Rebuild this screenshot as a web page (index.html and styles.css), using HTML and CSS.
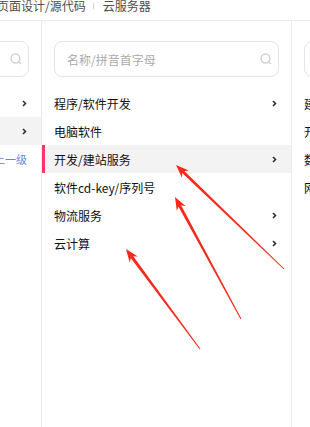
FILE: index.html
```html
<!DOCTYPE html>
<html lang="zh-CN">
<head>
  <meta charset="UTF-8" />
  <title>云服务器</title>
  <link rel="stylesheet" href="styles.css">
</head>
<body>
  <div class="crumbs">
    <span>页面设计/源代码</span>
    <span class="sep"></span>
    <span>云服务器</span>
  </div>

  <div class="cols">
    <div class="col">
      <div class="search">
        <span class="ph"></span>
        <svg class="ico" width="12" height="12" viewBox="0 0 12 12"><circle cx="5.5" cy="5.5" r="4.4"/><path d="M8.6 8.6l2.4 2.4"/></svg>
      </div>
      <ul class="list">
        <li>游戏/软件<svg class="arr" width="5" height="7" viewBox="0 0 5 7"><path d="M1 1l2.5 2.5L1 6"/></svg></li>
        <li class="on">网站/软件/源代码<svg class="arr" width="5" height="7" viewBox="0 0 5 7"><path d="M1 1l2.5 2.5L1 6"/></svg></li>
        <li class="back">返回上一级</li>
      </ul>
    </div>

    <div class="col">
      <div class="search">
        <span class="ph">名称/拼音首字母</span>
        <svg class="ico" width="12" height="12" viewBox="0 0 12 12"><circle cx="5.5" cy="5.5" r="4.4"/><path d="M8.6 8.6l2.4 2.4"/></svg>
      </div>
      <ul class="list">
        <li>程序/软件开发<svg class="arr" width="5" height="7" viewBox="0 0 5 7"><path d="M1 1l2.5 2.5L1 6"/></svg></li>
        <li>电脑软件</li>
        <li class="on mark">开发/建站服务<svg class="arr" width="5" height="7" viewBox="0 0 5 7"><path d="M1 1l2.5 2.5L1 6"/></svg></li>
        <li>软件cd-key/序列号</li>
        <li>物流服务<svg class="arr" width="5" height="7" viewBox="0 0 5 7"><path d="M1 1l2.5 2.5L1 6"/></svg></li>
        <li>云计算<svg class="arr" width="5" height="7" viewBox="0 0 5 7"><path d="M1 1l2.5 2.5L1 6"/></svg></li>
      </ul>
    </div>

    <div class="col">
      <div class="search">
        <span class="ph">名称/拼音首字母</span>
      </div>
      <ul class="list">
        <li>建站服务</li>
        <li>开发服务</li>
        <li>数据服务</li>
        <li>网站服务</li>
      </ul>
    </div>
  </div>

  <!-- 标注箭头 -->
  <svg class="marks" width="310" height="427" viewBox="0 0 310 427">
    <polygon points="176,165 188.84,170.42 182.48,171.24 181.90,177.62"/>
    <polygon points="183.52,170.16 284.35,268.64 283.65,269.36 181.44,172.32"/>
    <polygon points="175,197 185.59,206.05 179.28,204.92 176.79,210.81"/>
    <polygon points="180.60,204.21 241.44,318.76 240.56,319.24 177.96,205.63"/>
    <polygon points="126,249 137.75,256.48 131.35,256.24 129.71,262.42"/>
    <polygon points="132.56,255.35 200.40,348.70 199.60,349.30 130.14,257.13"/>
  </svg>
</body>
</html>
```

FILE: styles.css
```css
body {
  margin: 0;
  width: 310px;
  height: 427px;
  overflow: hidden;
  position: relative;
  background: #fff;
  font-family: "Noto Sans CJK SC", "Noto Sans", sans-serif;
  color: #111;
}

.crumbs {
  height: 20px;
  border-bottom: 1px solid #ececec;
  margin-left: -3px;
  font-size: 12px;
  line-height: 12px;
  color: #4d4d4d;
  display: flex;
  align-items: flex-start;
  white-space: nowrap;
}

.crumbs .sep {
  width: 1px;
  height: 6px;
  margin: 3px 9px 0 7px;
  background: #d4d4d4;
}

.cols {
  display: flex;
  margin-left: -208px;
  height: 406px;
}

.col {
  flex: 0 0 249px;
  border-right: 1px solid #ebebeb;
}

.search {
  margin: 20px 12px 12px;
  height: 34px;
  border: 1px solid #e4e4ea;
  border-radius: 8px;
  display: flex;
  align-items: center;
  justify-content: space-between;
  padding: 0 6px 0 12px;
}

.ph {
  font-size: 12px;
  color: #aaa;
  white-space: nowrap;
}

.ico {
  fill: none;
  stroke: #d2d2d2;
  stroke-width: 1.5;
}

.list {
  list-style: none;
  margin: 0;
  padding: 0;
}

.list li {
  height: 28px;
  display: flex;
  align-items: center;
  justify-content: space-between;
  padding: 0 14px 0 12px;
  font-size: 12px;
  white-space: nowrap;
  overflow: hidden;
}

.list li.on {
  background: #f3f3f3;
}

.list li.mark {
  box-shadow: inset 3px 0 0 #f5386a;
}

.list li.back {
  justify-content: flex-end;
  font-size: 11px;
  color: #6a88d0;
}

.arr {
  flex: none;
  fill: none;
  stroke: #2b2f3a;
  stroke-width: 1.6;
}

.marks {
  position: absolute;
  left: 0;
  top: 0;
  fill: #f5291b;
}
```
